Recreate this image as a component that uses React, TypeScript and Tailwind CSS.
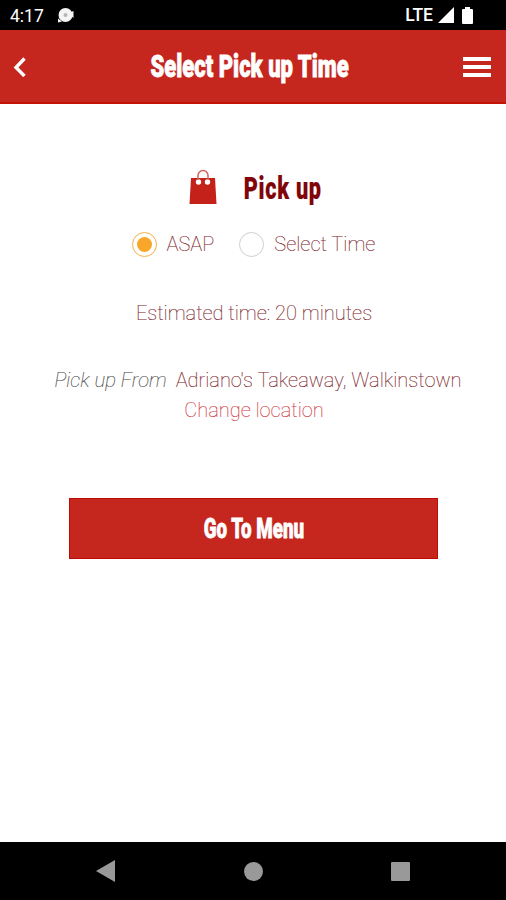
import clsx from 'clsx';

interface DisplayTextProps {
  children: string;
  className?: string;
}

// Heavy condensed lettering used for titles and buttons
function DisplayText({ children, className }: DisplayTextProps) {
  return (
    <span className={clsx('inline-block whitespace-nowrap font-black leading-none', className)}>
      {children}
    </span>
  );
}

function StatusBar() {
  return (
    <div className="flex h-[30px] items-center bg-black pl-2.5 pr-[33px] text-white">
      <span className="pt-px text-[17.5px] leading-[30px]">4:17</span>
      <svg className="ml-[13px]" width="18" height="16" viewBox="0 0 18 16" fill="#f4f4f4">
        <circle cx="8.5" cy="8" r="7" />
        <path d="M1 15.500v-4l4 3zM14 5l2.500-1v7l-2.500-2z" />
        <circle cx="8.5" cy="8" r="2" fill="#b5b5b5" />
      </svg>
      <span className="ml-auto text-[17.5px] font-medium leading-[30px]">LTE</span>
      <svg className="ml-[5px]" width="16" height="16" viewBox="0 0 16 16" fill="#fff">
        <path d="M16 0v16H0z" />
      </svg>
      <svg className="ml-2" width="11" height="17" viewBox="0 0 11 17" fill="#fff">
        <path d="M3 0h5v2h2a1 1 0 0 1 1 1v13a1 1 0 0 1-1 1H1a1 1 0 0 1-1-1V3a1 1 0 0 1 1-1h2z" />
      </svg>
    </div>
  );
}

function Header() {
  return (
    <header className="flex h-[74px] items-center justify-between border-b-2 border-[#c21306] bg-[#c5261e] pl-[13px] pr-[15px] text-white">
      <button aria-label="Back" className="w-7 pt-px">
        <svg width="13" height="20" viewBox="0 0 13 20" fill="none" stroke="#fff" strokeWidth="3.4">
          <path d="M11.500 1.500L3 10.500l8.500 8.500" />
        </svg>
      </button>
      <div className="mr-[5px] flex w-[204px] justify-center pt-px">
        <DisplayText className="scale-x-[0.71] text-[31px] [-webkit-text-stroke:0.8px_currentColor]">
          Select Pick up Time
        </DisplayText>
      </div>
      <button aria-label="Menu" className="flex w-7 flex-col gap-1 pt-0.5">
        <span className="h-1 bg-white" />
        <span className="h-1 bg-white" />
        <span className="h-1 bg-white" />
      </button>
    </header>
  );
}

function BagIcon() {
  return (
    <svg width="28" height="36" viewBox="0 0 28 36">
      <path d="M2 9h24l1.500 26H.5z" fill="#c5211b" />
      <circle cx="9.500" cy="13" r="2.700" fill="#fff" />
      <circle cx="18.500" cy="13" r="2.700" fill="#fff" />
      <path d="M9 11V6.500a5 5 0 0 1 10 0V11" fill="none" stroke="#cf6662" strokeWidth="1.500" />
    </svg>
  );
}

function TimeOption({ label, checked }: { label: string; checked?: boolean }) {
  return (
    <label className="flex items-center gap-2.5">
      <span
        className={clsx(
          'flex size-[25px] items-center justify-center rounded-full border',
          checked ? 'border-[#f5b04c]' : 'border-[#cfcfcf]'
        )}
      >
        {checked && <span className="size-[15px] rounded-full bg-[#f9a72b]" />}
      </span>
      <span>{label}</span>
    </label>
  );
}

function NavigationBar() {
  return (
    <nav className="flex h-[58px] items-center justify-between bg-black pl-24 pr-24">
      <svg width="19" height="22" viewBox="0 0 19 22" fill="#999">
        <path d="M19 0v22L0 11z" />
      </svg>
      <span className="size-[19px] rounded-full bg-[#999]" />
      <span className="size-[19px] rounded-[1px] bg-[#999]" />
    </nav>
  );
}

export default function App() {
  return (
    <div className="flex h-[900px] w-[506px] flex-col overflow-hidden bg-white font-['Roboto',sans-serif]">
      <StatusBar />
      <Header />
      <main className="flex flex-1 flex-col items-center text-[20px] font-[250] leading-[30px] text-[#7d2329] [-webkit-text-stroke:0.15px_currentColor]">
        <div className="ml-[5px] mt-[65px] flex h-9 w-[133px] items-center justify-between">
          <BagIcon />
          <div className="flex w-[79px] justify-center pt-[3px]">
            <DisplayText className="scale-x-[0.7] text-[31px] tracking-[1px] text-[#7f0508]">
              Pick up
            </DisplayText>
          </div>
        </div>
        <div className="ml-px mt-[24px] flex gap-[25px]">
          <TimeOption label="ASAP" checked />
          <TimeOption label="Select Time" />
        </div>
        <p className="ml-0.5 mt-[39px]">Estimated time: 20 minutes</p>
        <p className="ml-[10px] mt-[37px] whitespace-nowrap">
          <em className="mr-[9px] text-[20.3px] text-[#444]">Pick up From</em>
          Adriano's Takeaway, Walkinstown
        </p>
        <a className="ml-0.5 text-[#d0383e]">Change location</a>
        <button className="ml-px mt-[73px] flex h-[61px] w-[369px] items-center justify-center border border-[#c00a05] bg-[#c5261e] pt-px text-white">
          <DisplayText className="scale-x-[0.67] text-[28px] [-webkit-text-stroke:0.8px_currentColor]">
            Go To Menu
          </DisplayText>
        </button>
      </main>
      <NavigationBar />
    </div>
  );
}
